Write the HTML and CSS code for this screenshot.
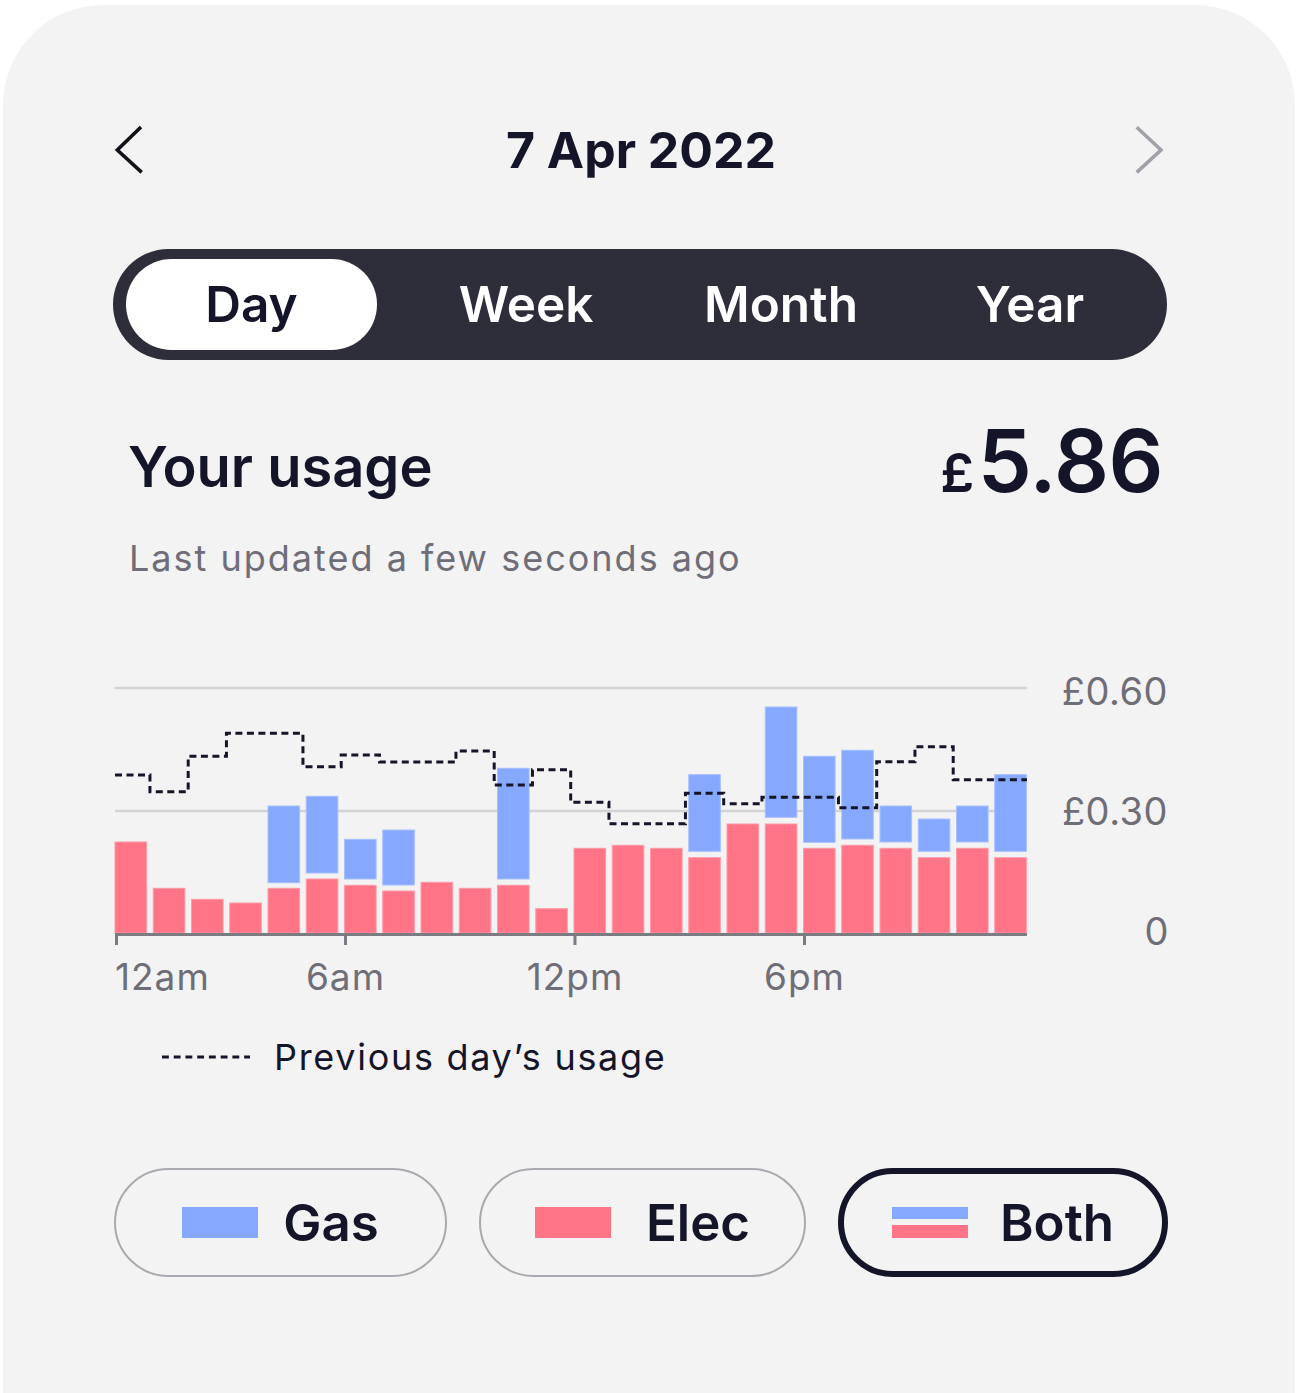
FILE: index.html
```html
<!DOCTYPE html>
<html lang="en">
<head>
<meta charset="utf-8">
<title>Your usage</title>
<link rel="stylesheet" href="styles.css">
</head>
<body>
<div class="card">
  <div class="inner">
    <header class="datebar">
      <svg class="chev" width="30" height="50" viewBox="0 0 30 50"><polyline points="27,2 3.3,25 27.7,47.3" fill="none" stroke="#111118" stroke-width="3.6"/></svg>
      <h1 class="date">7 Apr 2022</h1>
      <svg class="chev" width="30" height="50" viewBox="0 0 30 50"><polyline points="2.7,2.3 27,25 2.7,47.3" fill="none" stroke="#a1a1a9" stroke-width="3.6"/></svg>
    </header>

    <nav class="tabs">
      <span class="tab tab-day active">Day</span>
      <span class="tab tab-week">Week</span>
      <span class="tab tab-month">Month</span>
      <span class="tab tab-year">Year</span>
    </nav>

    <section class="summary">
      <div class="summary-row">
        <h2 class="usage-title">Your usage</h2>
        <div class="total"><span class="cur">£</span>5.86</div>
      </div>
      <p class="updated">Last updated a few seconds ago</p>
    </section>

    <div class="chart">
      <svg width="1054" height="340" viewBox="0 0 1054 340">
        <g class="grid">
          <line x1="0" y1="17" x2="912" y2="17"/>
          <line x1="0" y1="140" x2="912" y2="140"/>
        </g>
        <g class="elec">
          <rect x="0" y="171" width="31.6" height="91"/>
          <rect x="38.25" y="217.3" width="31.6" height="44.7"/>
          <rect x="76.5" y="228.3" width="31.6" height="33.7"/>
          <rect x="114.75" y="232" width="31.6" height="30"/>
          <rect x="153" y="217.3" width="31.6" height="44.7"/>
          <rect x="191.25" y="208" width="31.6" height="54"/>
          <rect x="229.5" y="214.3" width="31.6" height="47.7"/>
          <rect x="267.75" y="220" width="31.6" height="42"/>
          <rect x="306" y="211.3" width="31.6" height="50.7"/>
          <rect x="344.25" y="217.3" width="31.6" height="44.7"/>
          <rect x="382.5" y="214.3" width="31.6" height="47.7"/>
          <rect x="420.75" y="237.7" width="31.6" height="24.3"/>
          <rect x="459" y="177.3" width="31.6" height="84.7"/>
          <rect x="497.25" y="174.3" width="31.6" height="87.7"/>
          <rect x="535.5" y="177.3" width="31.6" height="84.7"/>
          <rect x="573.75" y="186.7" width="31.6" height="75.3"/>
          <rect x="612" y="153" width="31.6" height="109"/>
          <rect x="650.25" y="153" width="31.6" height="109"/>
          <rect x="688.5" y="177.3" width="31.6" height="84.7"/>
          <rect x="726.75" y="174.3" width="31.6" height="87.7"/>
          <rect x="765" y="177.3" width="31.6" height="84.7"/>
          <rect x="803.25" y="186.7" width="31.6" height="75.3"/>
          <rect x="841.5" y="177.3" width="31.6" height="84.7"/>
          <rect x="879.75" y="186.7" width="31.6" height="75.3"/>
        </g>
        <g class="gas">
          <rect x="153" y="135" width="31.6" height="76.7"/>
          <rect x="191.25" y="125.3" width="31.6" height="76.7"/>
          <rect x="229.5" y="168.3" width="31.6" height="39.7"/>
          <rect x="267.75" y="159" width="31.6" height="55"/>
          <rect x="382.5" y="97.3" width="31.6" height="110.7"/>
          <rect x="573.75" y="103.7" width="31.6" height="76.6"/>
          <rect x="650.25" y="36" width="31.6" height="110.3"/>
          <rect x="688.5" y="85.3" width="31.6" height="86"/>
          <rect x="726.75" y="79.3" width="31.6" height="88.7"/>
          <rect x="765" y="135" width="31.6" height="36"/>
          <rect x="803.25" y="148" width="31.6" height="32.3"/>
          <rect x="841.5" y="135" width="31.6" height="36"/>
          <rect x="879.75" y="103.7" width="31.6" height="76.6"/>
        </g>
        <path class="prev" d="M0 104 H34.95 V120.7 H73.2 V85.3 H111.45 V62.3 H187.95 V95.7 H226.2 V84 H264.45 V91 H340.95 V80 H379.2 V114 H417.45 V98.7 H455.7 V131.3 H493.95 V152.7 H570.45 V122.3 H608.7 V132.7 H646.95 V126.3 H723.45 V136.7 H761.7 V90.7 H799.95 V75.7 H838.2 V108.7 H912"/>
        <g class="axis">
          <line x1="0" y1="263.5" x2="912" y2="263.5"/>
          <line x1="1.5" y1="262" x2="1.5" y2="274"/>
          <line x1="230.5" y1="262" x2="230.5" y2="274"/>
          <line x1="460" y1="262" x2="460" y2="274"/>
          <line x1="689.5" y1="262" x2="689.5" y2="274"/>
        </g>
        <g class="ylabels">
          <text x="1053" y="34">£0.60</text>
          <text x="1053" y="153.5">£0.30</text>
          <text x="1054" y="274">0</text>
        </g>
        <g class="xlabels">
          <text x="0" y="319" class="first">12am</text>
          <text x="230.5" y="319">6am</text>
          <text x="460" y="319">12pm</text>
          <text x="689.5" y="319">6pm</text>
        </g>
      </svg>
    </div>

    <div class="legend">
      <svg class="legend-line" width="90" height="6" viewBox="0 0 90 6"><line x1="0" y1="3" x2="90" y2="3"/></svg>
      <span class="legend-text">Previous day’s usage</span>
    </div>

    <div class="filters">
      <button class="filter filter-gas">
        <span class="swatch swatch-gas"></span>
        <span class="filter-label">Gas</span>
      </button>
      <button class="filter filter-elec">
        <span class="swatch swatch-elec"></span>
        <span class="filter-label">Elec</span>
      </button>
      <button class="filter filter-both filter-active">
        <span class="swatch swatch-both"><span class="stripe stripe-gas"></span><span class="stripe stripe-elec"></span></span>
        <span class="filter-label">Both</span>
      </button>
    </div>
  </div>
</div>
</body>
</html>
```

FILE: styles.css
```css
* { box-sizing: border-box; }

html, body {
  margin: 0;
  padding: 0;
  background: #ffffff;
}

body {
  font-family: Inter, "Noto Sans", "Liberation Sans", sans-serif;
  color: #15152a;
}

.card {
  margin: 5px 0 0 3px;
  width: 1292px;
  min-height: 1388px;
  background: #f3f3f3;
  border-radius: 100px 100px 0 0;
  overflow: hidden;
}

.inner {
  margin-left: 110px;
  width: 1054px;
  padding-top: 122px;
}

/* date header */
.datebar {
  height: 46px;
  display: flex;
  align-items: center;
  justify-content: space-between;
}

.chev {
  display: block;
}

.chev:first-child { margin-left: 1px; }
.chev:last-child { margin-right: 3px; }

.date {
  margin: 0 0 0 4px;
  font-size: 50px;
  line-height: 46px;
  font-weight: 700;
  color: #15152a;
}

/* tabs */
.tabs {
  margin-top: 76px;
  height: 111px;
  background: #2e2d3a;
  border-radius: 56px;
  padding: 10px 13px;
  display: flex;
  align-items: center;
}

.tab {
  font-size: 49.5px;
  font-weight: 600;
  color: #ffffff;
  text-align: center;
  line-height: 91px;
}

.tab.active {
  background: #ffffff;
  color: #15152a;
  border-radius: 46px;
  height: 91px;
}

.tab-day { width: 251px; }
.tab-week { width: 160px; margin-left: 69px; }
.tab-month { width: 180px; margin-left: 85px; }
.tab-year { width: 140px; margin-left: 89px; }

/* summary */
.summary-row {
  margin-top: 59px;
  display: flex;
  justify-content: space-between;
  align-items: flex-start;
  height: 84px;
}

.usage-title {
  margin: 18px 0 0 15px;
  font-size: 56px;
  line-height: 60px;
  font-weight: 600;
  color: #15152a;
}

.total {
  font-size: 86px;
  line-height: 84px;
  font-weight: 600;
  color: #15152a;
  margin-right: 4px;
  letter-spacing: -0.5px;
}

.cur {
  font-size: 54px;
  margin-right: 4px;
}

.updated {
  margin: 33px 0 0 16px;
  font-size: 36px;
  line-height: 44px;
  color: #6f6e78;
  letter-spacing: 2px;
}

/* chart */
.chart {
  margin-top: 91px;
  margin-left: 2px;
  height: 340px;
}

.chart svg { display: block; overflow: visible; }

.grid line {
  stroke: #d3d3d6;
  stroke-width: 2.5;
}

.elec rect {
  fill: #ff7587;
  stroke: #ff9aa7;
  stroke-width: 1;
}

.gas rect {
  fill: #86a8ff;
  stroke: #a7bfff;
  stroke-width: 1;
}

.prev {
  fill: none;
  stroke: #15152a;
  stroke-width: 3;
  stroke-dasharray: 7 4.5;
}

.axis line {
  stroke: #7b7b84;
  stroke-width: 3;
}

.ylabels text {
  font-family: Inter, "Noto Sans", sans-serif;
  font-size: 38px;
  fill: #6f6e78;
  text-anchor: end;
  letter-spacing: 0.5px;
}

.xlabels text {
  font-family: Inter, "Noto Sans", sans-serif;
  font-size: 37px;
  fill: #6f6e78;
  text-anchor: middle;
  letter-spacing: 1px;
}

.xlabels text.first { text-anchor: start; }

/* legend */
.legend {
  margin-top: 24px;
  height: 44px;
  display: flex;
  align-items: center;
  padding-left: 49px;
}

.legend-line {
  display: block;
  width: 88px;
}

.legend-line line {
  stroke: #15152a;
  stroke-width: 3;
  stroke-dasharray: 7 5;
}

.legend-text {
  margin-left: 24px;
  font-size: 36px;
  line-height: 44px;
  letter-spacing: 1.7px;
  color: #15152a;
}

/* filters */
.filters {
  margin-top: 89px;
  margin-left: 1px;
  display: grid;
  grid-template-columns: 333px 327px 330px;
  column-gap: 32px;
}

.filter {
  height: 109px;
  border: 2.5px solid #a8a8ae;
  border-radius: 56px;
  background: transparent;
  display: flex;
  align-items: center;
  justify-content: center;
  gap: 28px;
  padding: 0;
  font-family: Inter, "Noto Sans", sans-serif;
  color: #15152a;
}

.filter-gas { gap: 25px; }
.filter-elec { gap: 35px; }
.filter-both { gap: 32px; }

.filter-active {
  border: 6px solid #15152a;
}

.filter-label {
  font-size: 51px;
  font-weight: 600;
  line-height: 60px;
}

.swatch {
  display: block;
  width: 76px;
  height: 31px;
}

.swatch-gas { background: #86a8ff; }
.swatch-elec { background: #ff7587; }

.swatch-both {
  display: flex;
  flex-direction: column;
  justify-content: space-between;
}

.stripe { display: block; height: 12px; }
.stripe-gas { background: #86a8ff; }
.stripe-elec { background: #ff7587; height: 13px; }
```
